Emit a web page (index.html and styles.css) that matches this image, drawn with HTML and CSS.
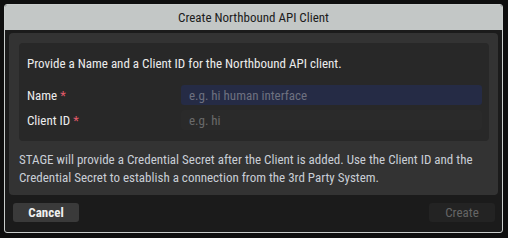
FILE: index.html
```html
<!DOCTYPE html>
<html lang="en">
<head>
  <meta charset="UTF-8">
  <link rel="stylesheet" href="styles.css">
</head>
<body>

<div class="dialog">
  <div class="dialog-title">Create Northbound API Client</div>

  <div class="dialog-body">
    <div class="section">
      <div class="form-panel">
        <p class="form-intro">Provide a Name and a Client ID for the Northbound API client.</p>
        <div class="form-row">
          <label class="form-label">Name <span class="req">*</span></label>
          <input class="form-input active" type="text" placeholder="e.g. hi human interface">
        </div>
        <div class="form-row">
          <label class="form-label">Client ID <span class="req">*</span></label>
          <input class="form-input" type="text" placeholder="e.g. hi">
        </div>
      </div>
      <p class="section-note">STAGE will provide a Credential Secret after the Client is added. Use the Client ID and the Credential Secret to establish a connection from the 3rd Party System.</p>
    </div>
  </div>

  <div class="dialog-footer">
    <button class="btn">Cancel</button>
    <button class="btn disabled">Create</button>
  </div>
</div>

</body>
</html>
```

FILE: styles.css
```css
body {
  margin: 0;
  padding: 4px 0 0 4px;
  background-color: #0e0e0e;
  font-family: "Roboto Condensed", "Liberation Sans Narrow", "DejaVu Sans Condensed", Roboto, sans-serif;
  font-size: 13px;
  color: #ececec;
}
.dialog {
  width: 497px;
  height: 227px;
  border: 1px solid #c9cdcc;
  border-radius: 3px;
  background-color: #1b1b1b;
  overflow: hidden;
}
.dialog-title {
  height: 25px;
  line-height: 25px;
  background-color: #c3c7c6;
  color: #1c1c1c;
  text-align: center;
}
.dialog-body {
  padding: 3px 4px 0 4px;
}
.section {
  background-color: #333333;
  border-radius: 4px;
  padding: 10px 9px 8px 10px;
}
.form-panel {
  background-color: #282828;
  border-radius: 4px;
  padding: 13px 7px 11px 8px;
}
.form-intro {
  margin: 0 0 13px 0;
  line-height: 16px;
}
.form-row {
  display: flex;
  align-items: center;
  margin-top: 5px;
}
.form-label {
  width: 154px;
}
.req {
  color: #e05a6a;
}
.form-input {
  flex: 1;
  height: 20px;
  box-sizing: border-box;
  border: none;
  border-radius: 3px;
  background-color: #2a2a2a;
  padding: 0 8px;
  font-family: inherit;
  font-size: 13px;
  color: #ddd;
  outline: none;
}
.form-input.active {
  background-color: #252b45;
}
.form-input::placeholder {
  color: #6a6a6a;
}
.form-input.active::placeholder {
  color: #6e7180;
}
.section-note {
  margin: 10px 0 0 0;
  line-height: 18px;
  color: #c9ced6;
}
.dialog-footer {
  display: flex;
  justify-content: space-between;
  padding: 8px 7px 0 8px;
}
.btn {
  height: 19px;
  min-width: 66px;
  border: none;
  border-radius: 3px;
  background-color: #3a3a3a;
  color: #f0f0f0;
  font-family: inherit;
  font-size: 13px;
  font-weight: bold;
  padding: 0 12px;
}
.btn.disabled {
  background-color: #232323;
  color: #656565;
  font-weight: normal;
}
```
